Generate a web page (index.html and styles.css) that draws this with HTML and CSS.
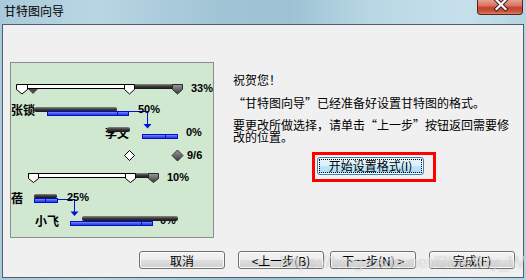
FILE: index.html
```html
<!DOCTYPE html>
<html lang="zh-CN">
<head>
<meta charset="utf-8">
<title>甘特图向导</title>
<link rel="stylesheet" href="styles.css">
</head>
<body>
<div class="window">
  <div class="titlebar">
    <span class="title">甘特图向导</span>
    <div class="close">
      <svg width="46" height="15" viewBox="0 0 46 15">
        <path d="M19.5 1 L28.5 10 M28.5 1 L19.5 10" stroke="#3a2020" stroke-width="4.2" stroke-linecap="square"/>
        <path d="M19.5 1 L28.5 10 M28.5 1 L19.5 10" stroke="#ffffff" stroke-width="2.2" stroke-linecap="square"/>
      </svg>
    </div>
  </div>
  <div class="client">
    <div class="main">
      <div class="preview">
        <svg class="chart" width="202" height="174" viewBox="11 63 202 174">
          <defs>
            <linearGradient id="dark" x1="0" y1="0" x2="0" y2="1">
              <stop offset="0" stop-color="#8a8a8a"/>
              <stop offset="0.45" stop-color="#3c3c3c"/>
              <stop offset="1" stop-color="#151515"/>
            </linearGradient>
            <linearGradient id="gray" x1="0" y1="0" x2="0" y2="1">
              <stop offset="0" stop-color="#9c9c9c"/>
              <stop offset="1" stop-color="#3a3a3a"/>
            </linearGradient>
            <linearGradient id="blue" x1="0" y1="0" x2="0" y2="1">
              <stop offset="0" stop-color="#8fa0ff"/>
              <stop offset="0.5" stop-color="#4458f4"/>
              <stop offset="1" stop-color="#2233dd"/>
            </linearGradient>
          </defs>

          <!-- top slider -->
          <rect x="17.5" y="84.5" width="165" height="4" fill="#fff" stroke="#000"/>
          <rect x="134" y="84" width="49" height="5" fill="url(#dark)"/>
          <polygon points="16.5,84.5 27.5,84.5 27.5,89.5 22,94 16.5,89.5" fill="#fff" stroke="#000"/>
          <polygon points="28,89 38,89 33,94" fill="#4a4a4a"/>
          <polygon points="124.5,84.5 134.5,84.5 134.5,89.5 129.5,94 124.5,89.5" fill="#fff" stroke="#000"/>
          <polygon points="172.5,84.5 182.5,84.5 182.5,89.5 177.5,94 172.5,89.5" fill="url(#gray)" stroke="#2a2a2a"/>
          <text class="pct" x="191" y="92">33%</text>

          <!-- row 1 -->
          <text class="name" x="11" y="114.5">张锁</text>
          <rect x="34" y="107" width="83" height="5" rx="2" fill="url(#dark)"/>
          <rect x="47.5" y="111.5" width="81" height="4" fill="url(#blue)" stroke="#0010c8"/>
          <line x1="117.5" y1="111.5" x2="117.5" y2="115.5" stroke="#0010c8"/>
          <polyline points="128.5,111.5 147.5,111.5 147.5,125" fill="none" stroke="#0010e0"/>
          <polygon points="143.5,124 151.5,124 147.5,128.5" fill="#0010e0"/>
          <text class="pct" x="138" y="113">50%</text>

          <!-- row 2 -->
          <text class="name" x="105" y="138">李文</text>
          <rect x="107" y="127" width="23" height="5" rx="2" fill="url(#dark)"/>
          <rect x="142.5" y="134.5" width="35" height="4" fill="url(#blue)" stroke="#0010c8"/>
          <line x1="165.5" y1="134.5" x2="165.5" y2="138.5" stroke="#0010c8"/>
          <text class="pct" x="186" y="136">0%</text>

          <!-- milestones -->
          <polygon points="129.5,150.5 134.5,155.5 129.5,160.5 124.5,155.5" fill="#fff" stroke="#000"/>
          <polygon points="177.5,150 183,155.5 177.5,161 172,155.5" fill="url(#gray)" stroke="#333"/>
          <text class="pct" x="187" y="159">9/6</text>

          <!-- second slider -->
          <rect x="28.5" y="173.5" width="129" height="4" fill="#fff" stroke="#000"/>
          <rect x="135" y="173" width="23" height="5" fill="url(#dark)"/>
          <polygon points="28.5,173.5 38.5,173.5 38.5,178.5 33.5,182.5 28.5,178.5" fill="#fff" stroke="#000"/>
          <polygon points="125.5,173.5 135.5,173.5 135.5,178.5 130.5,182.5 125.5,178.5" fill="#fff" stroke="#000"/>
          <polygon points="148.5,173.5 158.5,173.5 158.5,178.5 153.5,182.5 148.5,178.5" fill="url(#gray)" stroke="#2a2a2a"/>
          <text class="pct" x="167" y="180.5">10%</text>

          <!-- row 3 -->
          <text class="name" x="11" y="203">蓓</text>
          <rect x="34" y="194" width="23" height="4" rx="1.5" fill="url(#dark)"/>
          <rect x="34.5" y="198.5" width="23" height="4" fill="url(#blue)" stroke="#0010c8"/>
          <line x1="45.5" y1="198.5" x2="45.5" y2="202.5" stroke="#0010c8"/>
          <polyline points="57.5,199.5 74.5,199.5 74.5,212" fill="none" stroke="#0010e0"/>
          <polygon points="70.5,211.5 78.5,211.5 74.5,216" fill="#0010e0"/>
          <text class="pct" x="67" y="201">25%</text>

          <!-- row 4 -->
          <text class="name" x="35" y="225.5">小飞</text>
          <text class="pct" x="160" y="224">0%</text>
          <rect x="82" y="216" width="96" height="5" rx="2" fill="url(#dark)"/>
          <rect x="70.5" y="221.5" width="82" height="4" fill="url(#blue)" stroke="#0010c8"/>
          <line x1="141.5" y1="221.5" x2="141.5" y2="225.5" stroke="#0010c8"/>
        </svg>
      </div>
      <div class="info">
        <p class="line1">祝贺您！</p>
        <p class="line2">“甘特图向导”已经准备好设置甘特图的格式。</p>
        <p class="line3">要更改所做选择，请单击“上一步”按钮返回需要修<br>改的位置。</p>
        <div class="highlight">
          <button class="btn start"><span class="focus">开始设置格式(I)</span></button>
        </div>
      </div>
    </div>
    <div class="buttons">
      <button class="btn cancel">取消</button>
      <button class="btn back">&lt;上一步(B)</button>
      <button class="btn next">下一步(N) &gt;</button>
      <button class="btn finish">完成(F)</button>
    </div>
  </div>
  <div class="watermark">https://blog.csdn.net/BlueSky_W</div>
</div>
</body>
</html>
```

FILE: styles.css
```css
html, body {
  margin: 0;
  padding: 0;
}

body {
  width: 526px;
  height: 280px;
  overflow: hidden;
  font-family: "Noto Sans CJK SC", sans-serif;
}

.window {
  position: relative;
  width: 526px;
  height: 280px;
  display: flex;
  flex-direction: column;
  background: linear-gradient(90deg, #a9cadb 0%, #b9d6e3 18%, #a2c5d6 40%, #9dc2d3 55%, #b8d6e3 70%, #c6e1ec 88%, #b4d4e2 100%);
}

.titlebar {
  height: 24px;
  display: flex;
  align-items: flex-start;
  flex-shrink: 0;
}

.title {
  margin: 3px 0 0 4px;
  font-size: 12px;
  line-height: 16px;
  color: #000;
}

.close {
  margin-left: auto;
  margin-right: 3px;
  width: 46px;
  height: 15px;
  box-sizing: border-box;
  border: 1px solid #5a2218;
  border-top: none;
  border-radius: 0 0 4px 4px;
  background: linear-gradient(#e6a294 0%, #d87360 40%, #c4432c 55%, #c9523a 80%, #e07c60 100%);
  overflow: hidden;
}

.close svg {
  display: block;
  margin: -1px 0 0 -1px;
}

.client {
  margin: 0 2px 2px 2px;
  height: 254px;
  box-sizing: border-box;
  border: 1px solid #4f5e6c;
  background: #f0f0f0;
  padding: 37px 0 0 7px;
  display: flex;
  flex-direction: column;
}

.main {
  display: flex;
  align-items: flex-start;
  gap: 19px;
}

.preview {
  width: 204px;
  height: 176px;
  box-sizing: border-box;
  border: 1px solid #8c8c8c;
  background: #d0e8d0;
  flex-shrink: 0;
}

.chart {
  display: block;
}

.chart .pct {
  font-family: "Liberation Sans", sans-serif;
  font-weight: bold;
  font-size: 11px;
  fill: #000;
}

.chart .name {
  font-family: "Noto Sans CJK SC", sans-serif;
  font-weight: bold;
  font-size: 12px;
  fill: #000;
}

.info {
  padding-top: 12px;
  font-size: 12px;
  line-height: 12px;
  color: #000;
}

.info p {
  margin: 0;
}

.line2 {
  margin-top: 11px !important;
}

.line3 {
  margin-top: 10px !important;
}

.highlight {
  margin: 9px 0 0 79px;
  width: fit-content;
  border: 3px solid #ff0000;
  padding: 2px 9px 4px 2px;
}

.btn {
  display: block;
  height: 18px;
  width: 86px;
  padding: 0;
  box-sizing: border-box;
  border: 1px solid #707070;
  border-radius: 3px;
  background: linear-gradient(#f4f4f4 0%, #ececec 48%, #dedede 52%, #d0d0d0 100%);
  box-shadow: inset 0 0 0 1px #fbfbfb;
  font-family: "Noto Sans CJK SC", sans-serif;
  font-size: 12px;
  line-height: 15px;
  color: #000;
}

.start {
  width: 107px;
  border-color: #3c7fb1;
  background: linear-gradient(#eaf6fd 0%, #d9f0fc 48%, #bee6fd 52%, #a7d9f5 100%);
  box-shadow: inset 0 0 0 1px #f4fbff;
  padding: 1px;
}

.start .focus {
  display: block;
  height: 14px;
  line-height: 14px;
  outline: 1px dotted #000;
  outline-offset: -1px;
}

.buttons {
  display: flex;
  margin-top: 13px;
  padding-left: 129px;
}

.back {
  margin-left: 13px;
}

.next {
  margin-left: 6px;
}

.finish {
  margin-left: 13px;
}

.watermark {
  position: absolute;
  left: 280px;
  top: 253px;
  font-family: "Liberation Sans", sans-serif;
  font-size: 17px;
  line-height: 20px;
  color: rgba(255, 255, 255, 0.55);
  text-shadow: 0 0 1px rgba(90, 90, 90, 0.35);
  white-space: nowrap;
  pointer-events: none;
}
```
